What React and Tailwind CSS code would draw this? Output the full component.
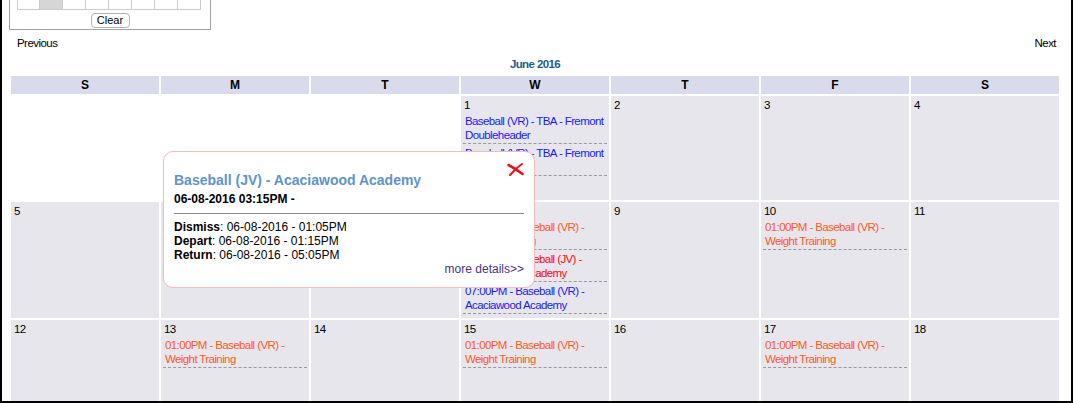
import React from "react";

// calendar text in the reference is a narrow face; Liberation Sans tightened to match widths
const CAL = {
  fontFamily: '"Liberation Sans Narrow", "Arial Narrow", "Liberation Sans", Arial, sans-serif',
};
const SANS = { fontFamily: '"Liberation Sans", Arial, sans-serif' };

const COLORS = {
  blue: "text-[#1a1aff]",
  orange: "text-[#ff5a28]",
  red: "text-[#ff0a0a]",
};

const TBA = ["Baseball (VR) - TBA - Fremont", "Doubleheader"];
const WEIGHTS = ["01:00PM - Baseball (VR) -", "Weight Training"];

const weeks = [
  [
    { blank: true },
    { blank: true },
    { blank: true },
    {
      day: 1,
      events: [
        { c: "blue", lines: TBA },
        { c: "blue", lines: TBA },
      ],
    },
    { day: 2 },
    { day: 3 },
    { day: 4 },
  ],
  [
    { day: 5 },
    { day: 6 },
    { day: 7 },
    {
      day: 8,
      events: [
        { c: "orange", lines: WEIGHTS },
        { c: "red", lines: ["03:15PM - Baseball (JV) -", "Acaciawood Academy"] },
        { c: "blue", lines: ["07:00PM - Baseball (VR) -", "Acaciawood Academy"] },
      ],
    },
    { day: 9 },
    { day: 10, events: [{ c: "orange", lines: WEIGHTS }] },
    { day: 11 },
  ],
  [
    { day: 12 },
    { day: 13, events: [{ c: "orange", lines: WEIGHTS }] },
    { day: 14 },
    { day: 15, events: [{ c: "orange", lines: WEIGHTS }] },
    { day: 16 },
    { day: 17, events: [{ c: "orange", lines: WEIGHTS }] },
    { day: 18 },
  ],
];

const rowHeights = ["h-[104px]", "h-[116px]", "h-[116px]"];

function DayCell({ cell, height }) {
  if (cell.blank) return <div className={`${height} bg-white`} />;
  return (
    <div className={`${height} bg-[#e6e6ec] pt-[2px] text-[11.5px] leading-[14px] tracking-[-0.6px]`}>
      <div className="pl-[3px] text-black">{cell.day}</div>
      {(cell.events || []).map((e, i) => (
        <div
          key={i}
          className={`mx-[2px] pl-[2px] pt-[2px] pb-[1px] border-b border-dashed border-[#999] whitespace-nowrap ${COLORS[e.c]}`}
        >
          {e.lines.map((l, j) => (
            <div key={j}>{l}</div>
          ))}
        </div>
      ))}
    </div>
  );
}

function Popup() {
  return (
    <div
      className="absolute left-[161px] top-[151px] w-[372px] h-[137px] bg-white border border-[#f7b9b9] rounded-[10px] px-[10px] pt-[19px] text-black"
      style={SANS}
    >
      <svg
        className="absolute top-[11px] right-[10px]"
        width="17"
        height="13"
        viewBox="0 0 17 13"
      >
        <path d="M1.5 2 Q8 5.5 15.5 11" fill="none" stroke="#e8141b" strokeWidth="2.6" strokeLinecap="round" />
        <path d="M15 1 Q9 5 3 12" fill="none" stroke="#e8141b" strokeWidth="2" strokeLinecap="round" />
      </svg>
      <div className="text-[14px] leading-[18px] font-bold text-[#6193cc]">
        Baseball (JV) - Acaciawood Academy
      </div>
      <div className="mt-[3px] text-[12px] leading-[14px] font-bold">06-08-2016 03:15PM -</div>
      <div className="mt-[7px] h-px bg-[#8a8a8a]" />
      <div className="mt-[6px] text-[12px] leading-[14px]">
        <div>
          <span className="font-bold">Dismiss</span>: 06-08-2016 - 01:05PM
        </div>
        <div>
          <span className="font-bold">Depart</span>: 06-08-2016 - 01:15PM
        </div>
        <div>
          <span className="font-bold">Return</span>: 06-08-2016 - 05:05PM
        </div>
        <div className="text-right text-[#4a3285]">more details&gt;&gt;</div>
      </div>
    </div>
  );
}

export default function App() {
  return (
    <div className="w-[1074px] h-[403px] overflow-hidden bg-white">
      <div
        className="relative w-[1073px] h-[403px] overflow-hidden border-x-2 border-b-2 border-black"
        style={CAL}
      >
        {/* mini calendar, scrolled partly out of view */}
        <div className="ml-[7px] w-[202px] h-[30px] border-x border-b border-[#a3a3a3]">
          <div className="ml-[7px] flex">
            {[0, 1, 2, 3, 4, 5, 6, 7].map((i) => (
              <div
                key={i}
                className={`w-[23px] h-[10px] border-r border-b border-[#cccccc] ${
                  i === 0 ? "border-l" : ""
                } ${i === 1 ? "bg-[#d6d6d6]" : ""}`}
              />
            ))}
          </div>
          <div className="mt-[3px] flex justify-center">
            <button
              className="w-[39px] h-[15px] border border-[#b3b3b3] rounded-[4px] bg-white text-[11px] leading-[13px] text-black"
              style={SANS}
            >
              Clear
            </button>
          </div>
        </div>

        <div className="mt-[6px] flex justify-between pl-[15px] pr-[15px] text-[11.5px] leading-[14px] tracking-[-0.55px] text-black">
          <span>Previous</span>
          <span>Next</span>
        </div>

        <div className="ml-[7px] w-[1052px] mt-[7px] text-center text-[11.5px] leading-[14px] tracking-[-0.6px] font-bold text-[#245b8f]">
          June 2016
        </div>

        <div className="ml-[7px] w-[1052px] mt-[3px] p-[2px] grid grid-cols-7 gap-[2px]">
          {["S", "M", "T", "W", "T", "F", "S"].map((d, i) => (
            <div
              key={i}
              className="h-[18px] bg-[#d9dbec] flex items-center justify-center text-[12px] font-bold text-black"
            >
              {d}
            </div>
          ))}
          {weeks.map((week, wi) =>
            week.map((cell, ci) => (
              <DayCell key={`${wi}-${ci}`} cell={cell} height={rowHeights[wi]} />
            ))
          )}
        </div>

        <Popup />
      </div>
    </div>
  );
}
